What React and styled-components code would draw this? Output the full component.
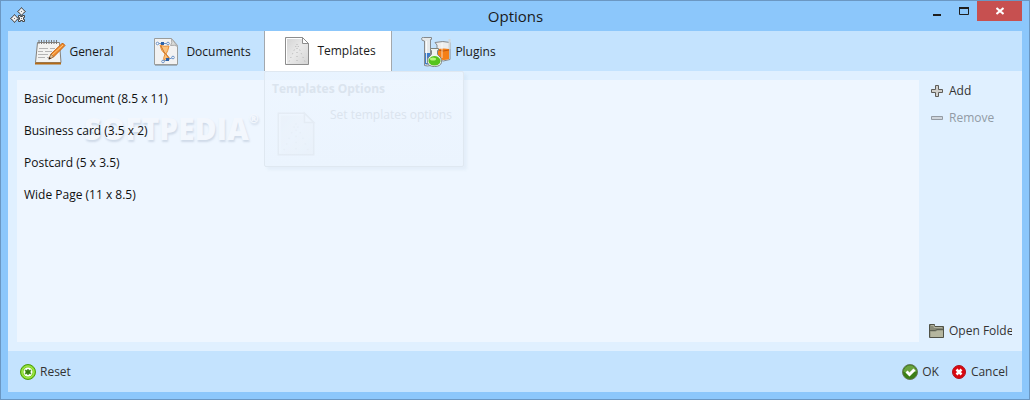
import React from 'react';
import styled, { createGlobalStyle } from 'styled-components';

const GlobalStyle = createGlobalStyle`
  * { box-sizing: border-box; }
  body {
    margin: 0;
    font-family: 'Open Sans', 'Noto Sans', sans-serif;
    font-size: 12px;
    line-height: 16px;
    color: #1a1a1a;
  }
  button { font: inherit; color: inherit; background: none; border: 0; padding: 0; }
  svg { display: block; flex: none; }
`;

const templates = [
  'Basic Document (8.5 x 11)',
  'Business card (3.5 x 2)',
  'Postcard (5 x 3.5)',
  'Wide Page (11 x 8.5)',
];

const AppIcon = () => (
  <svg width="18" height="18" viewBox="0 0 18 18" fill="#f1f1f1" stroke="#444">
    <path d="M12.500 .5l1.500 2 2.500 2-2.500 2-1.500 2-1.500-2-2.500-2 2.500-2z" />
    <path d="M5.500 7.500l1.500 2 2.500 2-2.500 2-1.500 2-1.500-2-2.500-2 2.500-2z" />
    <path d="M9.500 8.500h2v1h2v-1h2v2h-1v2h1v2h-2v-1h-2v1h-2v-2h1v-2h-1z" />
    <path d="M12 4h1v1h-1zM5 11h1v1h-1zM12 11h1v1h-1z" fill="#777" stroke="none" />
  </svg>
);

const NotepadIcon = () => (
  <svg width="32" height="28" viewBox="0 0 32 28">
    <path d="M3.500 4.500h22l1.500 20H1.500z" fill="#f3f3f1" stroke="#85827c" />
    <path d="M1 25.500h26" stroke="#b36a16" strokeWidth="2" />
    <path d="M5 2v4M7.500 2v4M10 2v4M12.500 2v4M15 2v4M17.500 2v4M20 2v4M22.500 2v4" stroke="#777" />
    <path d="M5 10.500h9m2 0h5M4 13.500h5m2 0h7M4 16.500h10M4 19.500h7m2 0h2" stroke="#b4b4b4" />
    <path d="M15 21l2-5L28 5.500q1-1 3 2L19.500 19z" fill="#f18b29" stroke="#c4671a" />
    <path d="M18 17L29 7" stroke="#ffc67e" />
    <path d="M15 21l2-5 2.500 3z" fill="#dec49e" stroke="#8c623b" strokeWidth=".6" />
    <path d="M14.500 21.500l1-2.500 1.500 1.500z" fill="#222" />
  </svg>
);

const DrawingIcon = () => (
  <svg width="26" height="30" viewBox="0 0 26 30">
    <path d="M1.500 1.500h17l6 7v19h-23z" fill="#f2f2f2" stroke="#9a9c9a" />
    <path d="M2 28.500h22" stroke="#666" strokeOpacity=".4" />
    <path d="M18.500 1.500q1 5-1 7 5-1 7 1z" fill="#d9dad8" stroke="#aaa" />
    <path d="M7 8q4 2 9 1-1 5-3 8 2 2 4 5-3-2-5 0l-1 2q-1-3 1-7-4-3-5-9z" fill="#fbc27c" stroke="#e98f38" />
    <path d="M8 9q2 6 8 12" stroke="#c8742c" fill="none" />
    <path d="M5 6.500h10M10 24.500l10-4" stroke="#6d94c8" />
    <g fill="#fff" stroke="#6d94c8">
      <circle cx="4.500" cy="6.500" r="1.300" />
      <circle cx="15" cy="6.500" r="1.300" />
      <circle cx="10" cy="24.500" r="1.300" />
      <circle cx="20" cy="20.500" r="1.300" />
    </g>
    <path d="M8 5h3v3H8zM13 21h3v3h-3z" fill="#2c62a8" />
  </svg>
);

const TemplateIcon = ({ width = 26 }) => (
  <svg width={width} height={(width * 30) / 26} viewBox="0 0 26 30">
    <defs>
      <linearGradient id="paper" x1="0" y1="0" x2="1" y2="1">
        <stop stopColor="#d2d2d2" />
        <stop offset=".5" stopColor="#e9e9e9" />
        <stop offset="1" stopColor="#d4d4d4" />
      </linearGradient>
    </defs>
    <path d="M1.500 1.500h17l6 6v21h-23z" fill="url(#paper)" stroke="#8d8d8d" />
    <path d="M2.500 27.500v-25H18" fill="none" stroke="#fff" />
    <path d="M13 8v20M12 10L4 28M14 10l8 18" stroke="#b4b4b4" strokeDasharray="1 3" fill="none" />
    <path d="M18.500 1.500v6h6z" fill="#fff" stroke="#8d8d8d" />
  </svg>
);

const FlasksIcon = () => (
  <svg width="32" height="32" viewBox="0 0 32 32">
    <path d="M1.500 2.500q0-1 2-1h8v2h-1v26q-3 1-6 0V5q-3 0-3-2.500z" fill="#e6e9ea" stroke="#85898c" />
    <path d="M5 17h5v11q-2 1-5 0z" fill="#3f7cc8" />
    <path d="M6.500 5v22" stroke="#fff" strokeOpacity=".8" />
    <path d="M15 6.500q8-2 15 0v17q-7 3-13 0V9z" fill="#eceded" stroke="#85898c" />
    <path d="M18 13q6-1 11 0v10q-5 2-11 0z" fill="#f57f17" />
    <path d="M18 14q5 2 11 0" stroke="#c2560a" fill="none" />
    <path d="M22 7v15" stroke="#fff" strokeOpacity=".35" strokeWidth="2" />
    <path d="M29.500 3v10" stroke="#d3d6d7" strokeWidth="2" />
    <path d="M10.500 12.500h8v2h-1v4q5 3 4 8-1 4-7 4t-7-4q-1-5 4-8v-4h-1z" fill="#eff3ef" stroke="#7f857f" />
    <path d="M9 23q2-3 5.500-3t5.500 3q1 2.500 0 4-2 2.500-5.500 2.500T9 27q-1-1.500 0-4z" fill="#55c41c" />
    <ellipse cx="13" cy="23" rx="3" ry="1.500" fill="#b7f478" />
  </svg>
);

const PlusIcon = () => (
  <svg width="16" height="16" viewBox="0 0 16 16">
    <path d="M6.500 2.500h3v4h4v3h-4v4h-3v-4h-4v-3h4z" fill="#d1d0cc" stroke="#5f5d58" />
  </svg>
);

const MinusIcon = () => (
  <svg width="16" height="16" viewBox="0 0 16 16">
    <path d="M2.500 6.500h11v3h-11z" fill="#cfd5dc" stroke="#949ba3" />
  </svg>
);

const FolderIcon = () => (
  <svg width="16" height="16" viewBox="0 0 16 16">
    <path d="M.5 1.500h5v2h9v11H.5z" fill="#898b79" stroke="#505247" />
    <path d="M1.500 14V8.500h5l2-1h5.500V14z" fill="#b5b69f" />
    <path d="M1 7.500h5l2-1h6" fill="none" stroke="#5d6053" />
    <path d="M2 2.500h3v2h8" fill="none" stroke="#b0b19e" />
  </svg>
);

const ResetIcon = () => (
  <svg width="16" height="16" viewBox="0 0 16 16">
    <circle cx="8" cy="8" r="7.500" fill="#7ed321" stroke="#4f9e10" />
    <circle cx="8" cy="8" r="6" fill="none" stroke="#a5ea55" />
    <circle cx="8" cy="8" r="4.500" fill="#fff" />
    <path d="M8 5l1 1.500 2-.5-1 2 1 2-2-.5-1 1.500-1-1.500-2 .5 1-2-1-2 2 .5z" fill="#367f0b" stroke="#367f0b" strokeWidth=".6" />
  </svg>
);

const OkIcon = () => (
  <svg width="16" height="16" viewBox="0 0 16 16">
    <circle cx="8" cy="8" r="7.500" fill="#3b7f16" stroke="#65795a" />
    <path d="M1.500 8a6.500 6.500 0 0 1 13 0z" fill="#6aa33f" />
    <path d="M4.500 7.500L7.500 10.500l5-5" fill="none" stroke="#fff" strokeWidth="3" />
  </svg>
);

const CancelIcon = () => (
  <svg width="16" height="16" viewBox="0 0 16 16">
    <circle cx="8" cy="8" r="6.500" fill="#d90710" stroke="#b0141b" />
    <path d="M5.500 5.500l5 5m0-5l-5 5" stroke="#fff" strokeWidth="2.500" />
  </svg>
);

const Window = styled.div`
  min-height: 100vh;
  display: flex;
  flex-direction: column;
  padding: 0 7px 7px;
  background: #8cc7fb;
  border: 1px solid #6b97c2;
`;

const TitleBar = styled.header`
  display: grid;
  grid-template-columns: 1fr auto 1fr;
  height: 30px;
  align-items: center;
  padding-left: 1px;
`;

const Title = styled.h1`
  margin: 0;
  font-size: 15px;
  line-height: 20px;
  font-weight: 400;
`;

const WindowButtons = styled.div`
  display: flex;
  justify-content: flex-end;
  align-self: start;
`;

const WindowButton = styled.button`
  display: grid;
  place-items: center;
  width: ${p => (p.$close ? 45 : 27)}px;
  height: 20px;
  background: ${p => (p.$close ? '#c75050' : 'transparent')};
`;

const TabBar = styled.nav`
  display: flex;
  height: 40px;
  background: #c4e3fe;
`;

const TabSlot = styled.div`
  position: relative;
  display: flex;
`;

const Tab = styled.button`
  display: flex;
  align-items: center;
  justify-content: center;
  gap: ${p => p.$gap}px;
  width: 128px;
  padding: ${p => (p.$active ? 0 : 2)}px 0 0 4px;
  background: ${p => (p.$active ? '#fff' : 'transparent')};
  border: solid #a3a8ad;
  border-width: ${p => (p.$active ? '0 1px' : '0')};
`;

const Tooltip = styled.div`
  position: absolute;
  z-index: 2;
  top: 40px;
  left: 0;
  width: 200px;
  height: 96px;
  padding: 9px 7px;
  color: #dbe4ee;
  background: linear-gradient(rgba(238, 246, 255, .6), #ebf4fe);
  border: 1px solid #dfe8f1;
  border-radius: 2px;
  box-shadow: 3px 3px 3px rgba(120, 150, 180, .08);
`;

const TooltipTitle = styled.strong`
  display: block;
`;

const TooltipBody = styled.div`
  display: flex;
  gap: 14px;
  padding: 10px 0 0 4px;

  svg { margin-top: 4px; opacity: .08; }
`;

const Content = styled.main`
  flex: 1;
  display: flex;
  padding: 9px 10px 9px 9px;
  background: #e0f0ff;
`;

const ListPanel = styled.section`
  position: relative;
  flex: 1;
  background: #eef6ff;
`;

const List = styled.ul`
  position: relative;
  z-index: 1;
  list-style: none;
  margin: 0;
  padding: 3px 7px;
`;

const ListItem = styled.li`
  line-height: 32px;
  color: #111;
`;

const Watermark = styled.div`
  position: absolute;
  left: 67px;
  top: 29px;
  display: flex;
  font-size: 30px;
  line-height: 40px;
  font-weight: 800;
  color: #f3f7fd;
  text-shadow: 1px 2px 2px rgba(110, 130, 160, .24);
  pointer-events: none;

  sup { font-size: 12px; line-height: 20px; }
`;

const Sidebar = styled.aside`
  display: flex;
  flex-direction: column;
  justify-content: space-between;
  width: 93px;
  padding-left: 10px;
  overflow: hidden;
`;

const SideButton = styled.button`
  display: flex;
  align-items: center;
  gap: 4px;
  height: ${p => (p.$last ? 22 : 27)}px;
  padding-bottom: ${p => (p.$last ? 0 : 6)}px;
  white-space: nowrap;
  color: ${p => (p.disabled ? '#929ba5' : '#333')};
`;

const Footer = styled.footer`
  display: flex;
  justify-content: space-between;
  height: 41px;
  padding: 0 14px 0 12px;
  background: #c4e3fe;
`;

const FooterGroup = styled.div`
  display: flex;
  gap: 12px;
`;

const FooterButton = styled.button`
  display: flex;
  align-items: center;
  gap: 4px;
  color: #333;
`;

const tabs = [
  { name: 'General', Icon: NotepadIcon, gap: 3 },
  { name: 'Documents', Icon: DrawingIcon, gap: 7 },
  { name: 'Templates', Icon: TemplateIcon, gap: 7, tip: 'Set templates options' },
  { name: 'Plugins', Icon: FlasksIcon, gap: 3 },
];

export default function App() {
  const [active, setActive] = React.useState('Templates');

  return (
    <>
      <GlobalStyle />
      <Window>
        <TitleBar>
          <AppIcon />
          <Title>Options</Title>
          <WindowButtons>
            <WindowButton aria-label="Minimize">
              <svg width="8" height="10"><path d="M0 9h8" stroke="#1e1e1e" strokeWidth="2" /></svg>
            </WindowButton>
            <WindowButton aria-label="Maximize">
              <svg width="10" height="8"><path d="M.5 1v6.500h9V1" fill="none" stroke="#1e1e1e" /><path d="M0 1h10" stroke="#1e1e1e" strokeWidth="2" /></svg>
            </WindowButton>
            <WindowButton $close aria-label="Close">
              <svg width="8" height="8"><path d="M.5 1l7 6m0-6l-7 6" stroke="#fff" strokeWidth="2" /></svg>
            </WindowButton>
          </WindowButtons>
        </TitleBar>

        <TabBar role="tablist">
          {tabs.map(({ name, Icon, gap, tip }) => (
            <TabSlot key={name}>
              <Tab
                role="tab"
                aria-selected={active === name}
                $active={active === name}
                $gap={gap}
                onClick={() => setActive(name)}
              >
                <Icon />
                {name}
              </Tab>
              {tip && active === name && (
                <Tooltip role="tooltip">
                  <TooltipTitle>{name} Options</TooltipTitle>
                  <TooltipBody>
                    <TemplateIcon width={40} />
                    {tip}
                  </TooltipBody>
                </Tooltip>
              )}
            </TabSlot>
          ))}
        </TabBar>

        <Content>
          <ListPanel>
            <Watermark>SOFTPEDIA<sup>®</sup></Watermark>
            <List>
              {templates.map(item => <ListItem key={item}>{item}</ListItem>)}
            </List>
          </ListPanel>
          <Sidebar>
            <div>
              <SideButton><PlusIcon />Add</SideButton>
              <SideButton disabled><MinusIcon />Remove</SideButton>
            </div>
            <SideButton $last><FolderIcon />Open Folder</SideButton>
          </Sidebar>
        </Content>

        <Footer>
          <FooterButton><ResetIcon />Reset</FooterButton>
          <FooterGroup>
            <FooterButton><OkIcon />OK</FooterButton>
            <FooterButton><CancelIcon />Cancel</FooterButton>
          </FooterGroup>
        </Footer>
      </Window>
    </>
  );
}
